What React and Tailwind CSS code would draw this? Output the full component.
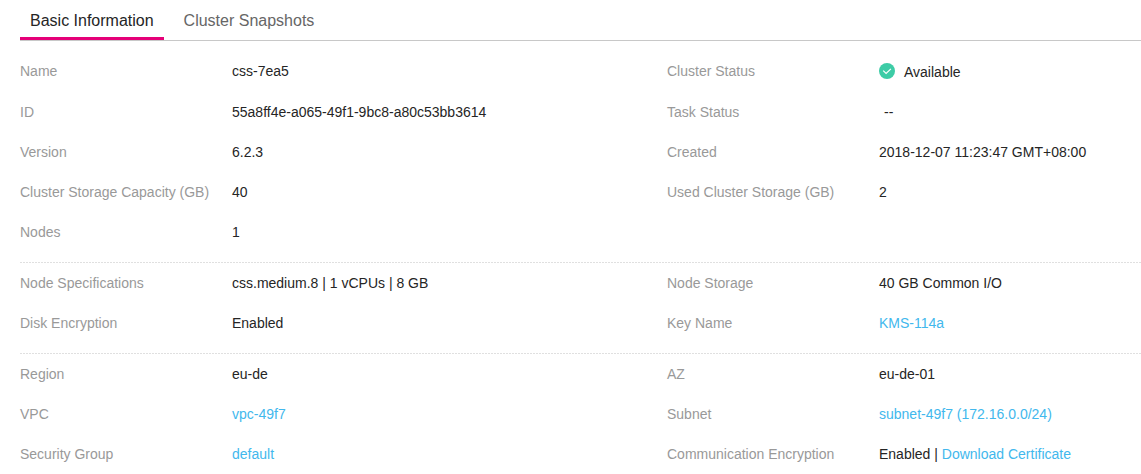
import React from "react";

const tabs = [
  { label: "Basic Information", active: true },
  { label: "Cluster Snapshots", active: false },
];

function Link({ children }) {
  return (
    <a href="#" className="text-[#42b8ed] hover:underline">
      {children}
    </a>
  );
}

function Available() {
  return (
    <span className="flex items-start gap-[9px]">
      <svg viewBox="0 0 16 16" className="mt-0.5 size-4 shrink-0" aria-hidden="true">
        <circle cx="8" cy="8" r="8" fill="#3dcca6" />
        <path d="M4.2 7.6 7.1 10.4 11.9 5.9" fill="none" stroke="#fff" strokeWidth="1.2" />
      </svg>
      <span className="pt-px">Available</span>
    </span>
  );
}

const sections = [
  [
    ["Name", "css-7ea5", "Cluster Status", <Available />],
    ["ID", "55a8ff4e-a065-49f1-9bc8-a80c53bb3614", "Task Status", <span className="pl-[5px]">--</span>],
    ["Version", "6.2.3", "Created", "2018-12-07 11:23:47 GMT+08:00"],
    ["Cluster Storage Capacity (GB)", "40", "Used Cluster Storage (GB)", "2"],
    ["Nodes", "1"],
  ],
  [
    ["Node Specifications", "css.medium.8 | 1 vCPUs | 8 GB", "Node Storage", "40 GB Common I/O"],
    ["Disk Encryption", "Enabled", "Key Name", <Link>KMS-114a</Link>],
  ],
  [
    ["Region", "eu-de", "AZ", "eu-de-01"],
    ["VPC", <Link>vpc-49f7</Link>, "Subnet", <Link>subnet-49f7 (172.16.0.0/24)</Link>],
    [
      "Security Group",
      <Link>default</Link>,
      "Communication Encryption",
      <>
        Enabled | <Link>Download Certificate</Link>
      </>,
    ],
  ],
];

function Field({ label, value }) {
  return (
    <div className="flex py-[10px]">
      <dt className="w-[212px] shrink-0 text-[#999]">{label}</dt>
      <dd className="text-[#252525]">{value}</dd>
    </div>
  );
}

export default function App() {
  return (
    <main className="bg-white pl-5 font-['Liberation_Sans',Arial,sans-serif] text-sm leading-5">
      <div role="tablist" className="mb-[10px] flex gap-[10px] border-b border-[#c8c8c8]">
        {tabs.map((tab) => (
          <button
            key={tab.label}
            type="button"
            role="tab"
            aria-selected={tab.active}
            className={
              tab.active
                ? "border-b-3 border-[#e50078] px-[10px] pt-[9px] pb-1 text-base text-[#252525]"
                : "border-b-3 border-transparent px-[10px] pt-[9px] pb-1 text-base text-[#666]"
            }
          >
            {tab.label}
          </button>
        ))}
      </div>
      {sections.map((rows, i) => (
        <React.Fragment key={i}>
          {i > 0 && (
            <hr className="mt-[10px] h-px border-0 bg-[repeating-linear-gradient(90deg,#e0e0e0_0px,#e0e0e0_2px,#fff_2px,#fff_3px)]" />
          )}
          <dl>
            {rows.map(([label, value, label2, value2]) => (
              <div key={label} className="grid grid-cols-[647fr_474fr]">
                <Field label={label} value={value} />
                {label2 && <Field label={label2} value={value2} />}
              </div>
            ))}
          </dl>
        </React.Fragment>
      ))}
    </main>
  );
}
